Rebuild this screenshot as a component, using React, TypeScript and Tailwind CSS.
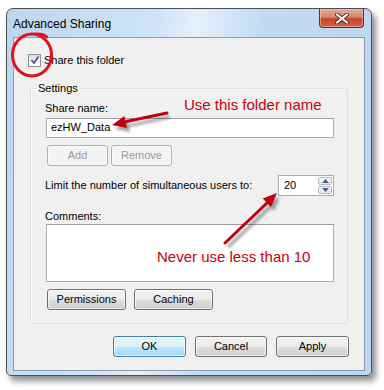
import React from 'react';

const FONT = "font-['Liberation_Sans',Arial,sans-serif]";

// Win7-style push button
function Btn({ label, w, disabled, primary }: { label: string; w: string; disabled?: boolean; primary?: boolean }) {
  const border = disabled ? 'border-[#adb2b5]' : primary ? 'border-[#3c7fb1]' : 'border-[#707070]';
  const bg = disabled
    ? 'bg-[#f4f4f4]'
    : primary
      ? 'bg-[linear-gradient(#eaf6fd_0%,#d9f0fc_50%,#bee6fd_51%,#a7d9f5_100%)]'
      : 'bg-[linear-gradient(#f2f2f2_0%,#ebebeb_50%,#dddddd_51%,#cfcfcf_100%)]';
  return (
    <div
      className={`${w} h-[21px] rounded-[3px] border ${border} ${bg} flex items-center justify-center text-[11px] ${disabled ? 'text-[#9a9a9a]' : 'text-black'} ${primary ? 'shadow-[inset_0_0_0_1px_rgba(255,255,255,0.7)]' : 'shadow-[inset_0_0_0_1px_rgba(255,255,255,0.6)]'}`}
    >
      {label}
    </div>
  );
}

function Annotations() {
  return (
    <svg className="absolute left-0 top-0 z-10 pointer-events-none" width="384" height="390" viewBox="0 0 384 390">
      <defs>
        <filter id="blur" x="-20%" y="-20%" width="140%" height="140%">
          <feGaussianBlur stdDeviation="1.6" />
        </filter>
      </defs>
      {/* red circle round the checkbox */}
      <ellipse cx="32" cy="55" rx="19.5" ry="21" fill="none" stroke="#e3101c" strokeWidth="3" />
      <path d="M34 34 C40 33 45 35 47 37" fill="none" stroke="#e3101c" strokeWidth="2.5" strokeLinecap="round" />
      {/* arrow shadows */}
      <g opacity="0.45" filter="url(#blur)" transform="translate(3 4)">
        <line x1="167" y1="113" x2="124" y2="122" stroke="#333" strokeWidth="3.2" />
        <polygon points="112,125 127,128 124.4,116" fill="#333" />
        <line x1="225" y1="243" x2="268" y2="202" stroke="#333" strokeWidth="3.2" />
        <polygon points="277,193 271,207 262.7,198.4" fill="#333" />
      </g>
      <line x1="167" y1="113" x2="124" y2="122" stroke="#c00010" strokeWidth="3" strokeLinecap="round" />
      <polygon points="112,125 127,128 124.4,116" fill="#c00010" />
      <line x1="225" y1="243" x2="268" y2="202" stroke="#c00010" strokeWidth="3" strokeLinecap="round" />
      <polygon points="277,193 271,207 262.7,198.4" fill="#c00010" />
    </svg>
  );
}

export default function App() {
  return (
    <div className={`relative w-[384px] h-[390px] bg-white overflow-hidden ${FONT}`}>
      {/* Window frame */}
      <div className="ml-[6px] mt-[8px] w-[366px] h-[368px] rounded-t-[7px] rounded-b-[5px] border border-[#4a4f55] bg-[linear-gradient(100deg,#bcd6ef_0%,#cfe3f6_35%,#e4f0fb_45%,#c3dbf2_60%,#bcd6ef_100%)] shadow-[4px_5px_6px_rgba(0,0,0,0.45)] flex flex-col">
        {/* Title bar */}
        <div className="h-[28px] flex items-start justify-between">
          <span className="ml-[6px] mt-[9px] text-[12px] text-black leading-none">Advanced Sharing</span>
          <div className="mr-[7px] w-[45px] h-[19px] rounded-b-[4px] border border-t-0 border-[#6b2a20] bg-[linear-gradient(#e8a99a_0%,#d98472_45%,#c2452c_55%,#d0624a_100%)] flex items-center justify-center shadow-[inset_0_0_0_1px_rgba(255,200,190,0.5)]">
            <svg width="14" height="11" viewBox="0 0 14 11">
              <path d="M2 1.5 L12 9.5 M12 1.5 L2 9.5" stroke="#5a2a24" strokeWidth="4" strokeLinecap="round" />
              <path d="M2 1.5 L12 9.5 M12 1.5 L2 9.5" stroke="#ffffff" strokeWidth="2.2" strokeLinecap="round" />
            </svg>
          </div>
        </div>

        {/* Client area */}
        <div className="mx-[6px] h-[334px] border border-[#8d9cad] bg-[#f0f0f0] flex flex-col">
          {/* Share checkbox */}
          <div className="ml-[14px] mt-[14px] flex items-center gap-[3px]">
            <div className="w-[13px] h-[13px] border border-[#8e8f8f] bg-[linear-gradient(#dcdcdc,#ffffff)] flex items-center justify-center">
              <svg width="10" height="10" viewBox="0 0 10 10">
                <path d="M1.5 5 L4 8 L8.5 1.5" fill="none" stroke="#4a5f97" strokeWidth="1.8" />
              </svg>
            </div>
            <span className="text-[11px] text-black">Share this folder</span>
          </div>

          {/* Settings group */}
          <div className="relative ml-[16px] mt-[19px] w-[318px] h-[236px] rounded-[3px] border border-[#d5dfe5] shadow-[inset_1px_1px_0_#ffffff] flex flex-col">
            <span className="absolute left-[5px] top-[-8px] px-[2px] bg-[#f0f0f0] text-[11px] leading-[14px] text-black">Settings</span>

            <div className="ml-[14px] mt-[12px] text-[11px] leading-[14px] text-black">Share name:</div>
            <div className="ml-[15px] mt-[3px] w-[288px] h-[20px] border border-[#abadb3] border-t-[#9a9ca3] bg-white flex items-center pl-[4px] text-[11px] text-black">
              ezHW_Data
            </div>

            <div className="ml-[16px] mt-[7px] flex gap-[3px]">
              <Btn label="Add" w="w-[61px]" disabled />
              <Btn label="Remove" w="w-[61px]" disabled />
            </div>

            <div className="ml-[14px] mt-[9px] flex items-center justify-between w-[289px]">
              <span className="text-[11px] text-black">Limit the number of simultaneous users to:</span>
              <div className="flex h-[21px] border border-[#abadb3] bg-white">
                <div className="w-[38px] flex items-center pl-[5px] text-[11px] text-black">20</div>
                <div className="w-[16px] flex flex-col gap-[1px] p-[1px]">
                  <div className="flex-1 rounded-[2px] border border-[#b5bcc6] bg-[linear-gradient(#f6f9fc,#dfe6ee)] flex items-center justify-center">
                    <svg width="7" height="4" viewBox="0 0 7 4"><polygon points="3.5,0 7,4 0,4" fill="#4d6185" /></svg>
                  </div>
                  <div className="flex-1 rounded-[2px] border border-[#b5bcc6] bg-[linear-gradient(#f6f9fc,#dfe6ee)] flex items-center justify-center">
                    <svg width="7" height="4" viewBox="0 0 7 4"><polygon points="0,0 7,0 3.5,4" fill="#4d6185" /></svg>
                  </div>
                </div>
              </div>
            </div>

            <div className="ml-[14px] mt-[13px] text-[11px] leading-[14px] text-black">Comments:</div>
            <div className="ml-[15px] mt-[1px] w-[288px] h-[58px] border border-[#abadb3] border-t-[#9a9ca3] bg-white" />

            <div className="ml-[16px] mt-[7px] flex gap-[8px]">
              <Btn label="Permissions" w="w-[79px]" />
              <Btn label="Caching" w="w-[79px]" />
            </div>
          </div>

          {/* Dialog buttons */}
          <div className="mt-[12px] ml-[99px] flex gap-[9px]">
            <Btn label="OK" w="w-[73px]" primary />
            <Btn label="Cancel" w="w-[72px]" />
            <Btn label="Apply" w="w-[73px]" />
          </div>
        </div>
      </div>

      {/* Annotation text */}
      <span className="absolute left-[184px] top-[96px] text-[15px] leading-[18px] text-[#c8000e]">Use this folder name</span>
      <span className="absolute left-[157px] top-[248px] text-[15px] leading-[18px] text-[#c8000e]">Never use less than 10</span>

      <Annotations />
    </div>
  );
}
